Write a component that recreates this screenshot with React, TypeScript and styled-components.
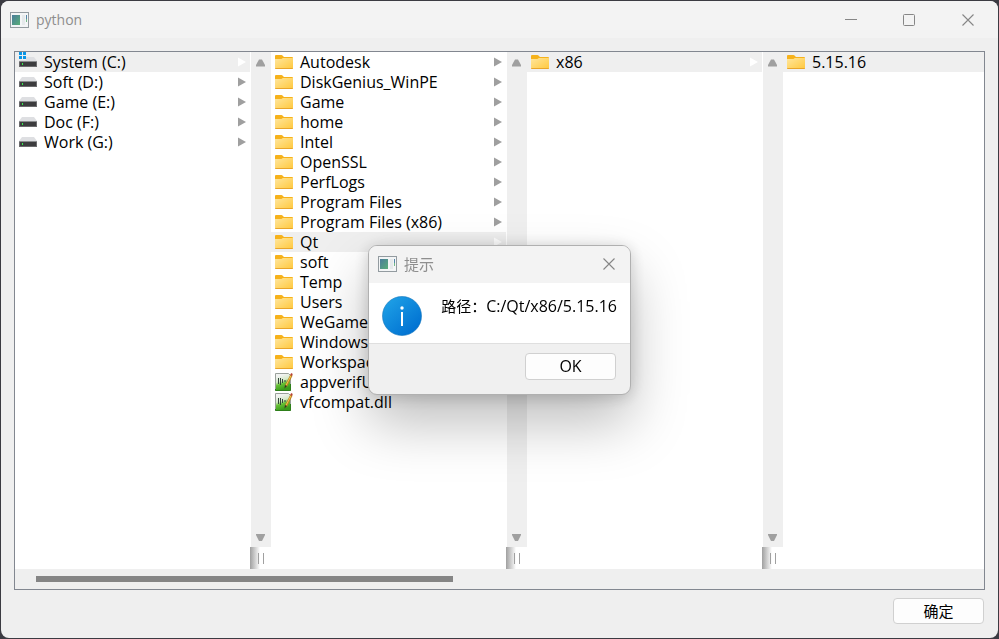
import React from "react";
import styled, { createGlobalStyle } from "styled-components";

const GlobalStyle = createGlobalStyle`
  *, *::before, *::after { box-sizing: border-box; }
  body {
    margin: 0;
    background: #3b3b42;
    color: #000;
    font-family: "Open Sans", "Noto Sans CJK SC", sans-serif;
    font-size: 16px;
    line-height: 20px;
  }
  button { font: inherit; color: inherit; }
`;

const Desktop = styled.div`
  display: grid;
  height: 100vh;
  padding: 1px;
  background: #3b3b42;
`;

const Window = styled.main`
  display: flex;
  flex-direction: column;
  min-height: 0;
  min-width: 0;
  border-radius: 8px;
  background: #efefef;
  overflow: hidden;
`;

const TitleBar = styled.header`
  display: flex;
  align-items: center;
  flex: none;
  height: 37px;
  padding-left: 9px;
  background: #f3f3f3;
  color: #8e8e8e;
`;

const Title = styled.h1<{ $size: number }>`
  flex: 1;
  margin: 0 0 0 7px;
  font-size: ${(p) => p.$size}px;
  font-weight: 400;
  line-height: 20px;
`;

const CaptionButton = styled.button<{ $width: number }>`
  display: grid;
  place-items: center;
  width: ${(p) => p.$width}px;
  height: 36px;
  padding: 0;
  border: 0;
  background: transparent;
`;

const Content = styled.div`
  display: flex;
  flex: 1;
  flex-direction: column;
  min-height: 0;
  padding: 13px 13px 14px;
  gap: 8px;
`;

const Browser = styled.section`
  display: flex;
  flex: 1;
  flex-direction: column;
  min-height: 0;
  border: 1px solid #828790;
  background: #fff;
  overflow: hidden;
`;

const Columns = styled.div`
  display: grid;
  flex: 1;
  grid-template-columns: repeat(3, 256px) 1fr;
  min-height: 0;
`;

const Column = styled.div`
  display: flex;
  min-width: 0;
  min-height: 0;
`;

const Entries = styled.ul`
  flex: 1;
  min-width: 0;
  margin: 0;
  padding: 0;
  list-style: none;
`;

const Entry = styled.button<{ $selected: boolean }>`
  display: flex;
  align-items: center;
  width: 100%;
  height: 20px;
  padding: 0 4px;
  gap: 7px;
  border: 0;
  background: ${(p) => (p.$selected ? "#efefef" : "transparent")};
  line-height: 20px;
  text-align: left;
  white-space: nowrap;
`;

const EntryName = styled.span`
  flex: 1;
`;

const Side = styled.div`
  display: flex;
  flex: none;
  flex-direction: column;
  align-items: flex-end;
  width: 21px;
`;

const Scrollbar = styled.div`
  display: flex;
  flex: 1;
  flex-direction: column;
  justify-content: space-between;
  width: 20px;
  padding: 6px 0;
  background: #efefef;
`;

const ScrollButton = styled.button`
  display: grid;
  place-items: center;
  width: 20px;
  height: 9px;
  padding: 0;
  border: 0;
  background: transparent;
`;

const Grip = styled.div`
  display: flex;
  align-items: center;
  justify-content: flex-end;
  width: 21px;
  height: 22px;
  padding-right: 7px;
  gap: 4px;
  background: linear-gradient(to right, #a0a0a0, #fff 10px);
`;

const GripLine = styled.span`
  width: 1px;
  height: 11px;
  background: #a0a0a0;
`;

const HorizontalBar = styled.div`
  display: flex;
  align-items: center;
  flex: none;
  height: 20px;
  padding: 0 21px;
  background: #efefef;
`;

const Thumb = styled.div`
  width: 45%;
  height: 6px;
  background: #858585;
`;

const Actions = styled.div`
  display: flex;
  justify-content: flex-end;
  padding-right: 1px;
  font-size: 15px;
`;

const PushButton = styled.button<{ $height: number }>`
  width: 91px;
  height: ${(p) => p.$height}px;
  padding: 0;
  border: 1px solid #d0d0d0;
  border-radius: 4px;
  background: #fdfdfd;
  line-height: 20px;
`;

const Overlay = styled.div`
  position: fixed;
  inset: 0;
  display: grid;
  place-items: center;
`;

const Dialog = styled.section`
  width: 263px;
  border: 1px solid #b0b0b0;
  border-radius: 9px;
  background: #f0f0f0;
  box-shadow: 0 28px 56px rgba(0, 0, 0, 0.26), 0 2px 16px rgba(0, 0, 0, 0.18);
  overflow: hidden;
`;

const Message = styled.div`
  display: flex;
  align-items: flex-start;
  height: 60px;
  padding: 13px 13px 0;
  justify-content: space-between;
  background: #fff;
`;

const MessageText = styled.p`
  margin: 0;
  white-space: nowrap;
`;

const MessageLabel = styled.span`
  font-size: 15px;
`;

const DialogActions = styled.footer`
  display: flex;
  justify-content: flex-end;
  padding: 9px 14px 14px;
  border-top: 1px solid #dfdfdf;
`;

const AppIcon = () => (
  <svg width="19" height="16" viewBox="0 0 19 16" aria-hidden="true">
    <defs>
      <linearGradient id="appPane" x1="0" y1="0" x2="1" y2="1">
        <stop offset="0" stopColor="#4a7c9b" />
        <stop offset="1" stopColor="#58ae78" />
      </linearGradient>
    </defs>
    <rect x=".5" y=".5" width="18" height="15" fill="#f3f5f6" stroke="#939ba0" />
    <rect x="2" y="3" width="8" height="10" fill="url(#appPane)" />
    <path d="M12 3h3v10h-3z" fill="#e5e9eb" />
    <path d="M16 3h1v4h-1z" fill="#5585a8" />
    <path d="M16 7h1v3h-1z" fill="#73b987" />
  </svg>
);

const CloseIcon = () => (
  <svg width="12" height="12" viewBox="0 0 12 12" aria-hidden="true">
    <path d="M.5.5l11 11M11.500.5l-11 11" stroke="#868686" strokeWidth="1.1" />
  </svg>
);

const FolderIcon = () => (
  <svg width="18" height="16" viewBox="0 0 18 16" aria-hidden="true">
    <defs>
      <linearGradient id="folder" x1="0" y1="0" x2="1" y2="1">
        <stop offset="0" stopColor="#ffe69c" />
        <stop offset="1" stopColor="#ffc83d" />
      </linearGradient>
    </defs>
    <path d="M0 2q0-1 1-1h5.500q.6 0 1 .5L9 3h8q1 0 1 1v3H0z" fill="#f6b21b" />
    <path d="M0 5h6q.6 0 1-.5L8 4h10v10q0 1-1 1H1q-1 0-1-1z" fill="url(#folder)" />
    <path d="M0 14h18q0 1-1 1H1q-1 0-1-1z" fill="#e9a52a" />
  </svg>
);

const DriveIcon = ({ system }: { system?: boolean }) => (
  <svg width="18" height="20" viewBox="0 0 18 20" aria-hidden="true">
    <path d="M3 5h12l3 4H0z" fill="#dedfe2" />
    <path d="M0 9h18v6H0z" fill="#3c3c3e" />
    <path d="M0 9h18v1H0z" fill="#8b8d8f" />
    <path d="M0 14h18v1H0zM0 10h1v5H0zM17 10h1v5h-1z" fill="#6a6a6c" />
    <rect x="3" y="11" width="1" height="2" fill="#33ef48" />
    {system && (
      <>
        <path d="M0 0h7v8H0z" fill="#efefef" />
        <path d="M0 0h3v3H0zM4 0h3v3H4zM0 4h3v3H0zM4 4h3v3H4z" fill="#0a96e6" />
      </>
    )}
  </svg>
);

const LibraryIcon = () => (
  <svg width="18" height="20" viewBox="0 0 18 20" aria-hidden="true">
    <defs>
      <linearGradient id="library" x1="0" y1="0" x2=".3" y2="1">
        <stop offset=".2" stopColor="#f1f3f1" />
        <stop offset=".5" stopColor="#d3e8c6" />
        <stop offset=".68" stopColor="#66c034" />
        <stop offset="1" stopColor="#3a9c1c" />
      </linearGradient>
    </defs>
    <path d="M.5 1.500h13l2 2v15H.5z" fill="url(#library)" stroke="#9aa19b" />
    <path d="M.5 17v1.500h15V12" fill="none" stroke="#2e7f1a" />
    <path d="M3.500 6v6M5.500 6v7M7.500 7v4M9 9h2" stroke="#33463a" fill="none" />
    <path d="M16.500 3L11 14" stroke="#bd8424" strokeWidth="2.500" />
    <path d="M16 3.500L11 13.500" stroke="#f0c44f" />
    <path d="M15.200 3l1-2 1.600 1-1 2z" fill="#b94436" />
    <path d="M10 13l2 1-2.500 2.500z" fill="#3b3020" />
  </svg>
);

const ChevronIcon = ({ selected }: { selected: boolean }) => (
  <svg width="8" height="10" viewBox="0 0 8 10" aria-hidden="true">
    <path d="M0 .5L8 5 0 9.500z" fill={selected ? "#fff" : "#9f9f9f"} />
  </svg>
);

const ScrollArrow = ({ down }: { down?: boolean }) => (
  <svg width="10" height="8" viewBox="0 0 10 8" aria-hidden="true">
    <path d={down ? "M0 1h9v1L6 8H3L0 2z" : "M0 7.500h9V6L6 .5H3L0 6z"} fill="#a0a0a0" />
  </svg>
);

const InfoIcon = () => (
  <svg width="40" height="40" viewBox="0 0 40 40" aria-hidden="true">
    <defs>
      <linearGradient id="info" x1=".15" y1=".1" x2=".85" y2=".9">
        <stop offset="0" stopColor="#1d9ee5" />
        <stop offset="1" stopColor="#0070d1" />
      </linearGradient>
    </defs>
    <circle cx="20" cy="20" r="19.500" fill="url(#info)" stroke="#1477bd" strokeOpacity=".6" />
    <circle cx="20" cy="12" r="1.700" fill="#fff" />
    <path d="M20 16v14" stroke="#fff" strokeWidth="2" />
  </svg>
);

type Kind = "system" | "drive" | "folder" | "library";
type Item = { name: string; kind: Kind };

const folders = (...names: string[]): Item[] => names.map((name) => ({ name, kind: "folder" }));

const drives: Item[] = [
  { name: "System (C:)", kind: "system" },
  { name: "Soft (D:)", kind: "drive" },
  { name: "Game (E:)", kind: "drive" },
  { name: "Doc (F:)", kind: "drive" },
  { name: "Work (G:)", kind: "drive" },
];

const rootItems: Item[] = [
  ...folders(
    "Autodesk", "DiskGenius_WinPE", "Game", "home", "Intel", "OpenSSL", "PerfLogs",
    "Program Files", "Program Files (x86)", "Qt", "soft", "Temp", "Users",
    "WeGameApps", "Windows", "Workspace",
  ),
  { name: "appverifUI.dll", kind: "library" },
  { name: "vfcompat.dll", kind: "library" },
];

const columns = [
  { items: drives, selected: "System (C:)" },
  { items: rootItems, selected: "Qt" },
  { items: folders("x86"), selected: "x86" },
  { items: folders("5.15.16"), selected: "5.15.16", last: true },
];

const ItemIcon = ({ kind }: { kind: Kind }) => {
  if (kind === "folder") return <FolderIcon />;
  if (kind === "library") return <LibraryIcon />;
  return <DriveIcon system={kind === "system"} />;
};

export default function App() {
  return (
    <>
      <GlobalStyle />
      <Desktop>
        <Window>
          <TitleBar>
            <AppIcon />
            <Title $size={14}>python</Title>
            <CaptionButton $width={58} aria-label="Minimize">
              <svg width="12" height="12" aria-hidden="true"><path d="M0 5.500h12" stroke="#868686" /></svg>
            </CaptionButton>
            <CaptionButton $width={58} aria-label="Maximize">
              <svg width="12" height="12" aria-hidden="true">
                <rect x=".5" y=".5" width="11" height="11" rx="1" fill="none" stroke="#868686" />
              </svg>
            </CaptionButton>
            <CaptionButton $width={60} aria-label="Close"><CloseIcon /></CaptionButton>
          </TitleBar>
          <Content>
            <Browser>
              <Columns>
                {columns.map(({ items, selected, last }) => (
                  <Column key={selected}>
                    <Entries>
                      {items.map((item) => (
                        <li key={item.name}>
                          <Entry $selected={item.name === selected}>
                            <ItemIcon kind={item.kind} />
                            <EntryName>{item.name}</EntryName>
                            {!last && item.kind !== "library" && (
                              <ChevronIcon selected={item.name === selected} />
                            )}
                          </Entry>
                        </li>
                      ))}
                    </Entries>
                    {!last && (
                      <Side>
                        <Scrollbar>
                          <ScrollButton aria-label="Scroll up"><ScrollArrow /></ScrollButton>
                          <ScrollButton aria-label="Scroll down"><ScrollArrow down /></ScrollButton>
                        </Scrollbar>
                        <Grip><GripLine /><GripLine /></Grip>
                      </Side>
                    )}
                  </Column>
                ))}
              </Columns>
              <HorizontalBar><Thumb /></HorizontalBar>
            </Browser>
            <Actions><PushButton $height={26}>确定</PushButton></Actions>
          </Content>
        </Window>
      </Desktop>
      <Overlay>
        <Dialog role="dialog" aria-labelledby="dialog-title">
          <TitleBar>
            <AppIcon />
            <Title as="h2" id="dialog-title" $size={15}>提示</Title>
            <CaptionButton $width={42} aria-label="Close"><CloseIcon /></CaptionButton>
          </TitleBar>
          <Message>
            <InfoIcon />
            <MessageText><MessageLabel>路径：</MessageLabel>C:/Qt/x86/5.15.16</MessageText>
          </Message>
          <DialogActions><PushButton $height={27}>OK</PushButton></DialogActions>
        </Dialog>
      </Overlay>
    </>
  );
}
